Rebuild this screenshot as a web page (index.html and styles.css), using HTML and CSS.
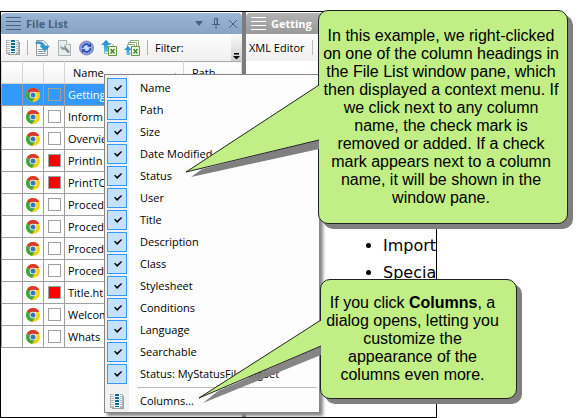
FILE: index.html
```html
<!DOCTYPE html>
<html lang="en">
<head>
<meta charset="utf-8">
<title>File List</title>
<link rel="stylesheet" href="styles.css">
</head>
<body>
<svg class="defs" aria-hidden="true">
  <defs>
    <linearGradient id="up" x1="0" y1="0" x2="0" y2="1"><stop offset="0" stop-color="#1c7fc0"/><stop offset="1" stop-color="#62c4f0"/></linearGradient>
    <radialGradient id="ball"><stop offset="0" stop-color="#e4e9ff"/><stop offset="1" stop-color="#6f8be6"/></radialGradient>
    <symbol id="chrome" viewBox="0 0 14 14">
      <circle cx="7" cy="7" r="7" fill="#fbd01f"/>
      <path d="M7 7 1 3.4A7 7 0 0 0 6 13.9L9.800 8.400Z" fill="#3fa648"/>
      <path d="M7 7 .9 3.500A7 7 0 0 1 13.300 4H7Z" fill="#dc3a2c"/>
      <path d="M.9 3.500 4.300 8.500 7 7Z" fill="#3fa648"/>
      <circle cx="7" cy="7" r="3.300" fill="#fff"/>
      <circle cx="7" cy="7" r="2.500" fill="#3478bd"/>
    </symbol>
    <symbol id="columns" viewBox="0 0 14 15">
      <path d="M2 2h12v13H2z" fill="#a0a0a0"/>
      <path d="M0 0h13v14H0z" fill="#b4b4b4"/>
      <path d="M1 1h3v1H1zM1 3h3v1H1zM1 5h3v1H1zM1 7h3v1H1zM1 9h3v1H1zM1 11h3v1H1zM10 1h2v1h-2zM10 3h2v1h-2zM10 5h2v1h-2zM10 7h2v1h-2zM10 9h2v1h-2zM10 11h2v1h-2z" fill="#fff"/>
      <path d="M4 0h6v14H4z" fill="#e6f2f8"/>
      <path d="M5 0h4v2H5zM5 3h4v2H5zM5 6h4v2H5zM5 9h4v2H5zM5 12h4v1H5z" fill="#0f6a9c"/>
    </symbol>
    <symbol id="excel" viewBox="0 0 9 10">
      <path d="M.5.5h8v9h-8z" fill="#eef8e6" stroke="#62a03f"/>
      <path d="m2.500 3 4 4.500M6.500 3l-4 4.500" stroke="#3f8a2a" stroke-width="1.400"/>
    </symbol>
  </defs>
</svg>

<main class="app">
  <section class="pane files">
    <header class="title">
      <span class="grip"></span>
      <h1>File List</h1>
      <button class="tool small" aria-label="Pane menu"><svg width="8" height="5"><path d="M0 0h8L4 5z" fill="#46627f"/></svg></button>
      <button class="tool small" aria-label="Pin"><svg width="8" height="11" fill="none" stroke="#46627f"><path d="M2.500 6V.5h3V6M5 0v6M0 6.500h8M4 7v4"/></svg></button>
      <button class="tool small" aria-label="Close"><svg width="8" height="8" stroke="#46627f"><path d="m0 0 8 8M8 0 0 8"/></svg></button>
    </header>
    <div class="toolbar">
      <button class="tool" aria-label="Columns"><svg width="14" height="15"><use href="#columns"/></svg></button>
      <span class="rule"></span>
      <button class="tool" aria-label="Open">
        <svg width="15" height="16"><path d="M1.500.5h7l4 4v11h-11z" fill="#f4f8fa" stroke="#8fa0aa"/><path d="M3 9.500h6M3 11.500h8M3 13.500h8" stroke="#8ea9b8"/><path d="M1 2c4-1 8 0 9 4h4.500L10 11 5 6h2C6 4 4 3 1 4z" fill="#2f98d4" stroke="#3384b4" stroke-width=".5"/></svg>
      </button>
      <button class="tool" aria-label="Properties">
        <svg width="15" height="16"><path d="M1.500.5h8l4 4v11h-12z" fill="#e9eced" stroke="#aab3b5"/><path d="M9.500.5v4h4" fill="#fff" stroke="#aab3b5"/><path d="m8 8 4 4.500" stroke="#858d8f" stroke-width="2.500"/><path d="M3.500 5.500 5.500 7.500l2-.5v-2.500A3.500 3.500 0 0 1 8.500 9.500 3.500 3.500 0 0 1 3.500 5.500z" fill="#909799"/></svg>
      </button>
      <button class="tool" aria-label="Refresh">
        <svg width="15" height="16"><circle cx="7.500" cy="8" r="7" fill="url(#ball)" stroke="#8a8f9c"/><path d="M3.500 8A4 4 0 0 1 10 5M11.500 8A4 4 0 0 1 5 11" fill="none" stroke="#2c48ac" stroke-width="1.600"/><path d="m8 6.500 4 .5V3zM7 9.500 3 9v4z" fill="#2c48ac"/></svg>
      </button>
      <button class="tool" aria-label="Export to Excel">
        <svg width="16" height="16"><path d="M3.500 3.500h7l3 3v7h-10z" fill="#fff" stroke="#9cb68d"/><path d="M5 0 10 5H7v7H3V5H0z" fill="url(#up)"/><use href="#excel" x="7" y="6" width="9" height="10"/></svg>
      </button>
      <button class="tool" aria-label="Export all to Excel">
        <svg width="16" height="16"><path d="M6.500 3V.5h8v9M4.500 5V2.500h8v7M3.500 7V4.500h7v9h-7z" fill="#fff" stroke="#8fab82"/><path d="m4 6 4 4H5.500v5h-3v-5H0z" fill="url(#up)"/><use href="#excel" x="7" y="6" width="9" height="10"/></svg>
      </button>
      <span class="rule"></span>
      <span class="filter">Filter:</span>
      <button class="more" aria-label="More options"><svg width="7" height="7"><path d="M1 0h5v1.500H1zM0 3h7L3.500 6.500z"/></svg></button>
    </div>
    <table class="list">
      <thead><tr><th class="c1"></th><th class="c2"></th><th class="c2"></th><th class="name">Name <svg class="sort" width="7" height="4"><path d="m0 4 3.500-4L7 4z" fill="#999"/></svg></th><th class="path">Path</th></tr></thead>
      <tbody>
        <tr class="selected"><td></td><td><svg class="ico"><use href="#chrome"/></svg></td><td><i class="flag"></i></td><td>Getting</td><td></td></tr>
        <tr><td></td><td><svg class="ico"><use href="#chrome"/></svg></td><td><i class="flag"></i></td><td>Inform</td><td></td></tr>
        <tr><td></td><td><svg class="ico"><use href="#chrome"/></svg></td><td><i class="flag"></i></td><td>Overvie</td><td></td></tr>
        <tr><td></td><td><svg class="ico"><use href="#chrome"/></svg></td><td><i class="flag red"></i></td><td>PrintIn</td><td></td></tr>
        <tr><td></td><td><svg class="ico"><use href="#chrome"/></svg></td><td><i class="flag red"></i></td><td>PrintTO</td><td></td></tr>
        <tr><td></td><td><svg class="ico"><use href="#chrome"/></svg></td><td><i class="flag"></i></td><td>Proced</td><td></td></tr>
        <tr><td></td><td><svg class="ico"><use href="#chrome"/></svg></td><td><i class="flag"></i></td><td>Proced</td><td></td></tr>
        <tr><td></td><td><svg class="ico"><use href="#chrome"/></svg></td><td><i class="flag"></i></td><td>Proced</td><td></td></tr>
        <tr><td></td><td><svg class="ico"><use href="#chrome"/></svg></td><td><i class="flag"></i></td><td>Proced</td><td></td></tr>
        <tr><td></td><td><svg class="ico"><use href="#chrome"/></svg></td><td><i class="flag red"></i></td><td>Title.ht</td><td></td></tr>
        <tr><td></td><td><svg class="ico"><use href="#chrome"/></svg></td><td><i class="flag"></i></td><td>Welcom</td><td></td></tr>
        <tr><td></td><td><svg class="ico"><use href="#chrome"/></svg></td><td><i class="flag"></i></td><td>Whats</td><td></td></tr>
      </tbody>
    </table>
  </section>

  <section class="pane editor">
    <header class="title gray"><span class="grip"></span><h2>Getting</h2></header>
    <div class="toolbar tabs"><span>XML Editor</span><span class="rule"></span></div>
    <div class="strip"></div>
    <ul class="doc"><li>Import</li><li>Specia</li></ul>
  </section>
</main>

<div class="menu">
  <label><input type="checkbox" checked>Name</label>
  <label><input type="checkbox" checked>Path</label>
  <label><input type="checkbox" checked>Size</label>
  <label><input type="checkbox" checked>Date Modified</label>
  <label><input type="checkbox" checked>Status</label>
  <label><input type="checkbox" checked>User</label>
  <label><input type="checkbox" checked>Title</label>
  <label><input type="checkbox" checked>Description</label>
  <label><input type="checkbox" checked>Class</label>
  <label><input type="checkbox" checked>Stylesheet</label>
  <label><input type="checkbox" checked>Conditions</label>
  <label><input type="checkbox" checked>Language</label>
  <label><input type="checkbox" checked>Searchable</label>
  <label><input type="checkbox" checked>Status: MyStatusFileFlagSet</label>
  <hr>
  <button class="item"><svg width="14" height="15"><use href="#columns"/></svg>Columns...</button>
</div>

<aside class="callout intro">
  <svg class="tail" width="134" height="100"><path d="M6 97 134 69V60L17 89 13 92z" fill="#808080"/><path d="M134 5 1 92 134 60" fill="#c1ee85" stroke="#222"/></svg>
  <p>In this example, we right-clicked<br>on one of the column headings in<br>the File List window pane, which<br>then displayed a context menu. If<br>we click next to any column<br>name, the check mark is<br>removed or added. If a check<br>mark appears next to a column<br>name, it will be shown in the<br>window pane.</p>
</aside>
<aside class="callout columns">
  <svg class="tail" width="123" height="90"><path d="M5 84 123 36V27L20 72z" fill="#808080" opacity=".95"/><path d="M123 1 1 79 123 27" fill="#c1ee85" stroke="#222"/></svg>
  <p>If you click <b>Columns</b>, a<br>dialog opens, letting you<br>customize the<br>appearance of the<br>columns even more.</p>
</aside>
</body>
</html>
```
FILE: styles.css
```css
* { box-sizing: border-box; }
body {
  margin: 0;
  background: #fff;
  color: #000;
  font: 11px/16px "Open Sans", "Noto Sans", sans-serif;
  overflow: hidden;
}
.defs { position: absolute; width: 0; height: 0; }
button { border: 0; padding: 0; background: none; font: inherit; color: inherit; }
svg { display: block; flex: none; }

.app {
  display: flex;
  margin: 11px 145px 0 0;
  min-height: calc(100vh - 11px);
  border: 1px solid #000;
}
.pane { overflow: hidden; min-width: 0; background: #fff; }
.files { flex: 0 0 245px; border-right: 4px solid #7c7c7c; padding-top: 1px; }
.editor { flex: 1; padding-top: 1px; }

.title {
  display: flex;
  align-items: center;
  gap: 5px;
  height: 21px;
  padding: 0 3px 0 5px;
  border-radius: 4px 4px 0 0;
  background: linear-gradient(#9bb5d4, #86a4c5);
  color: #46627f;
}
.title h1, .title h2 { margin: 0; flex: 1; font-size: 11px; line-height: 20px; }
.title.gray { background: linear-gradient(#b2b2b2, #999); color: #fff; border-radius: 4px 0 0 0; }
.grip {
  width: 15px;
  height: 14px;
  background: repeating-linear-gradient(currentColor 0 1px, transparent 1px 4px);
}
.small { width: 12px; display: flex; justify-content: center; }

.toolbar {
  display: flex;
  align-items: center;
  gap: 7px;
  height: 27px;
  padding-left: 5px;
  background: linear-gradient(#fdfdfd, #f0f0f0);
}
.rule { width: 1px; height: 15px; background: #b0b0b0; }
.filter { flex: 1; }
.more {
  align-self: stretch;
  width: 11px;
  padding: 18px 0 0 2px;
  background: linear-gradient(#fafafa, #cfcfcf);
}
.tabs { padding-left: 3px; gap: 7px; }
.tabs .rule { background: #bbb; }
.strip { height: 14px; background: #fff; border-bottom: 1px solid #999; }
.editor .strip { margin-bottom: 157px; }

.list { width: 241px; border-collapse: collapse; table-layout: fixed; }
.list th {
  height: 22px;
  padding: 0;
  border: 1px solid #d5d5d5;
  border-top-color: #aaa;
  background: linear-gradient(#fff, #f2f2f2);
  font-weight: normal;
  text-align: left;
}
.c1 { width: 21px; }
.c2 { width: 21px; }
.list th.name { padding-left: 8px; width: 119px; }
.list th.path { padding-left: 8px; }
.sort { float: right; margin: 8px 4px 0 0; }
.list td { height: 22px; padding: 0 3px; border: 1px solid #a0a0a0; white-space: nowrap; overflow: hidden; }
.list .selected td { background: #3399ff; color: #fff; }
.ico { width: 14px; height: 14px; }
.flag { display: block; width: 13px; height: 13px; margin-left: 1px; border: 1px solid #a0a0a0; }
.red { background: #f00; }

.doc {
  margin: 0;
  padding-left: 137px;
  font: 16px/27px Verdana, "DejaVu Sans", sans-serif;
  white-space: nowrap;
}

.menu {
  position: absolute;
  left: 104px;
  top: 74px;
  width: 216px;
  padding: 2px 2px 0;
  border: 1px solid #868686;
  background: linear-gradient(90deg, #f1f1f1 24px, #fdfdfd 24px);
  box-shadow: 3px 3px 3px #888;
}
.menu label, .item {
  display: flex;
  align-items: center;
  gap: 13px;
  width: 100%;
  height: 22px;
  white-space: nowrap;
}
.menu input {
  appearance: none;
  flex: none;
  width: 20px;
  height: 20px;
  margin: 0;
  border: 1px solid #3399ff;
  background: #c4e1ff;
}
.menu input::before {
  content: "";
  display: block;
  width: 8px;
  height: 6px;
  margin: 6px;
  background: #000;
  clip-path: polygon(0 40%, 15% 30%, 38% 62%, 90% 0, 100% 15%, 40% 100%);
}
.menu hr { margin: 2px 0 2px 30px; border: 0; border-top: 1px solid #bdbdbd; }
.menu .item { padding-left: 3px; gap: 16px; }

.callout {
  position: absolute;
  border: 1px solid #222;
  border-radius: 10px;
  background: #c1ee85;
  box-shadow: 5px 5px 0 #808080;
  font: 16px/18px "Liberation Sans", Arial, sans-serif;
  text-align: center;
  white-space: nowrap;
}
.callout p { margin: 0; }
.tail { position: absolute; }
.intro { left: 318px; top: 10px; width: 250px; padding: 16px 4px 16px 0; }
.intro .tail { left: -134px; top: 69px; }
.columns { left: 320px; top: 279px; width: 197px; padding: 14px 12px 14px 0; }
.columns .tail { left: -123px; top: 39px; }
```
